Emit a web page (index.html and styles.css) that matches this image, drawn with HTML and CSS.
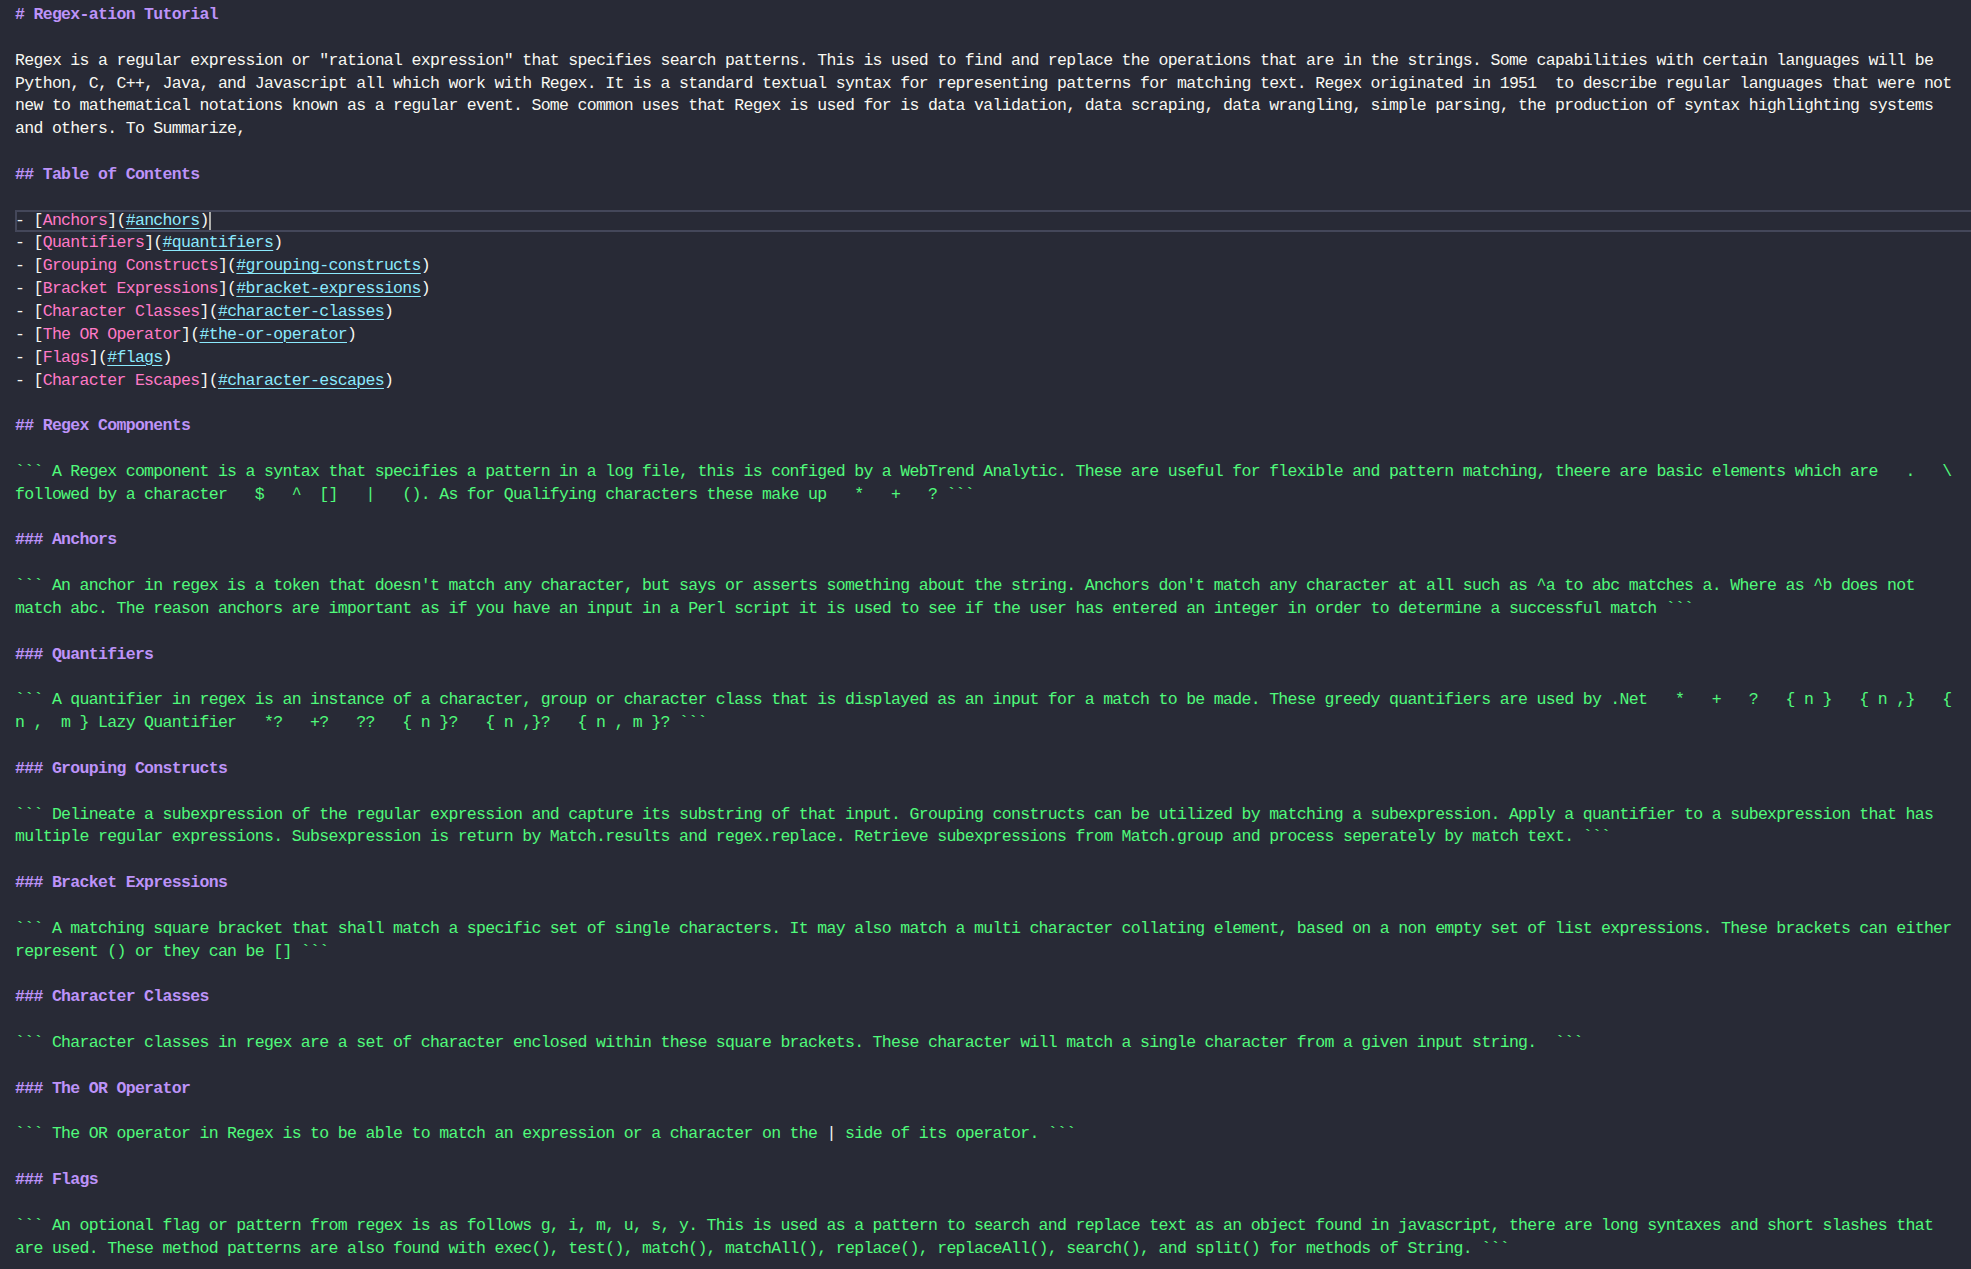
FILE: index.html
```
<!DOCTYPE html>
<html lang="en">
<head>
<meta charset="utf-8">
<title>README.md</title>
<link rel="stylesheet" href="styles.css">
</head>
<body>
<main class="editor">
<div class="line h"># Regex-ation Tutorial</div>
<div class="line"></div>
<div class="line">Regex is a regular expression or "rational expression" that specifies search patterns. This is used to find and replace the operations that are in the strings. Some capabilities with certain languages will be</div>
<div class="line">Python, C, C++, Java, and Javascript all which work with Regex. It is a standard textual syntax for representing patterns for matching text. Regex originated in 1951  to describe regular languages that were not</div>
<div class="line">new to mathematical notations known as a regular event. Some common uses that Regex is used for is data validation, data scraping, data wrangling, simple parsing, the production of syntax highlighting systems</div>
<div class="line">and others. To Summarize,</div>
<div class="line"></div>
<div class="line h">## Table of Contents</div>
<div class="line"></div>
<div class="line current">- [<span class="lt">Anchors</span>](<span class="lu">#anchors</span>)<span class="cursor"></span></div>
<div class="line">- [<span class="lt">Quantifiers</span>](<span class="lu">#quantifiers</span>)</div>
<div class="line">- [<span class="lt">Grouping Constructs</span>](<span class="lu">#grouping-constructs</span>)</div>
<div class="line">- [<span class="lt">Bracket Expressions</span>](<span class="lu">#bracket-expressions</span>)</div>
<div class="line">- [<span class="lt">Character Classes</span>](<span class="lu">#character-classes</span>)</div>
<div class="line">- [<span class="lt">The OR Operator</span>](<span class="lu">#the-or-operator</span>)</div>
<div class="line">- [<span class="lt">Flags</span>](<span class="lu">#flags</span>)</div>
<div class="line">- [<span class="lt">Character Escapes</span>](<span class="lu">#character-escapes</span>)</div>
<div class="line"></div>
<div class="line h">## Regex Components</div>
<div class="line"></div>
<div class="line code">``` A Regex component is a syntax that specifies a pattern in a log file, this is configed by a WebTrend Analytic. These are useful for flexible and pattern matching, theere are basic elements which are   .   \</div>
<div class="line code">followed by a character   $   ^  []   |   (). As for Qualifying characters these make up   *   +   ? ```</div>
<div class="line"></div>
<div class="line h">### Anchors</div>
<div class="line"></div>
<div class="line code">``` An anchor in regex is a token that doesn't match any character, but says or asserts something about the string. Anchors don't match any character at all such as ^a to abc matches a. Where as ^b does not</div>
<div class="line code">match abc. The reason anchors are important as if you have an input in a Perl script it is used to see if the user has entered an integer in order to determine a successful match ```</div>
<div class="line"></div>
<div class="line h">### Quantifiers</div>
<div class="line"></div>
<div class="line code">``` A quantifier in regex is an instance of a character, group or character class that is displayed as an input for a match to be made. These greedy quantifiers are used by .Net   *   +   ?   { n }   { n ,}   {</div>
<div class="line code">n ,  m } Lazy Quantifier   *?   +?   ??   { n }?   { n ,}?   { n , m }? ```</div>
<div class="line"></div>
<div class="line h">### Grouping Constructs</div>
<div class="line"></div>
<div class="line code">``` Delineate a subexpression of the regular expression and capture its substring of that input. Grouping constructs can be utilized by matching a subexpression. Apply a quantifier to a subexpression that has</div>
<div class="line code">multiple regular expressions. Subsexpression is return by Match.results and regex.replace. Retrieve subexpressions from Match.group and process seperately by match text. ```</div>
<div class="line"></div>
<div class="line h">### Bracket Expressions</div>
<div class="line"></div>
<div class="line code">``` A matching square bracket that shall match a specific set of single characters. It may also match a multi character collating element, based on a non empty set of list expressions. These brackets can either</div>
<div class="line code">represent () or they can be [] ```</div>
<div class="line"></div>
<div class="line h">### Character Classes</div>
<div class="line"></div>
<div class="line code">``` Character classes in regex are a set of character enclosed within these square brackets. These character will match a single character from a given input string.  ```</div>
<div class="line"></div>
<div class="line h">### The OR Operator</div>
<div class="line"></div>
<div class="line code">``` The OR operator in Regex is to be able to match an expression or a character on the <span class="bar">|</span> side of its operator. ```</div>
<div class="line"></div>
<div class="line h">### Flags</div>
<div class="line"></div>
<div class="line code">``` An optional flag or pattern from regex is as follows g, i, m, u, s, y. This is used as a pattern to search and replace text as an object found in javascript, there are long syntaxes and short slashes that</div>
<div class="line code">are used. These method patterns are also found with exec(), test(), match(), matchAll(), replace(), replaceAll(), search(), and split() for methods of String. ```</div>
<div class="line"></div>
</main>
</body>
</html>
```
FILE: styles.css
```
html, body {
  margin: 0;
  padding: 0;
  background: #282a36;
  overflow: hidden;
}

.editor {
  padding: 4px 0 0 15px;
  font-family: "Liberation Mono", "DejaVu Sans Mono", monospace;
  font-size: 16.5px;
  letter-spacing: -0.68px;
  color: #f8f8f2;
}

.line {
  height: 22.85px;
  line-height: 22.85px;
  white-space: pre;
  position: relative;
}

.h {
  color: #bd93f9;
  font-weight: bold;
}

.code {
  color: #50fa7b;
}

.lt {
  color: #ff79c6;
}

.lu {
  color: #8be9fd;
  text-decoration: underline;
  text-underline-offset: 3px;
  text-decoration-thickness: 1px;
}

.bar {
  color: #f8f8f2;
}

.current::before {
  content: "";
  position: absolute;
  left: 0;
  right: 0;
  top: 0;
  bottom: 0;
  border: 2px solid #44475a;
  border-right: none;
  pointer-events: none;
}

.cursor {
  display: inline-block;
  width: 0;
  height: 22px;
  border-left: 2px solid #aeafad;
  vertical-align: top;
}
```
